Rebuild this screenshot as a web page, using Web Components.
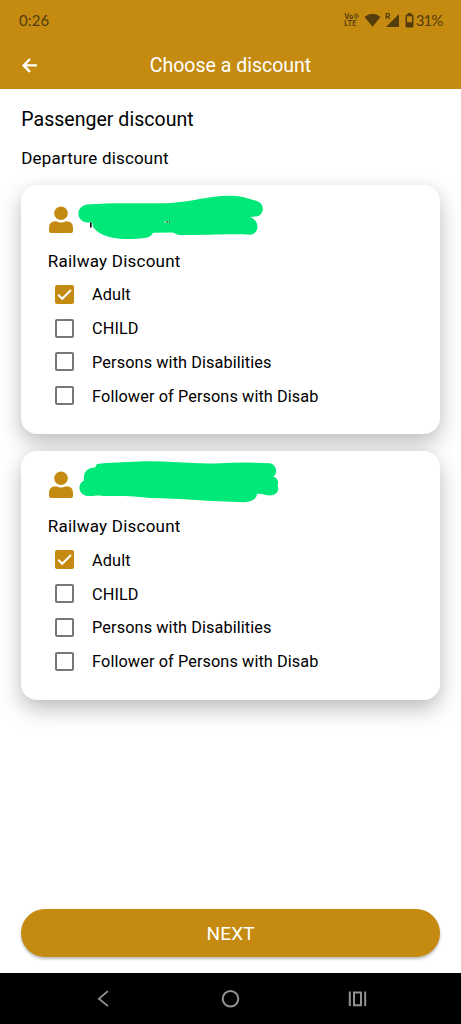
<!DOCTYPE html>
<html lang="en"><head><meta charset="utf-8"><title>Choose a discount</title>
<style>html,body{margin:0;height:100%;background:#fff;overflow:hidden}</style></head><body>
<discount-app></discount-app>
<script>
const define=(name,html)=>{
  const t=document.createElement('template');t.innerHTML=html;
  customElements.define(name,class extends HTMLElement{
    constructor(){super();this.attachShadow({mode:'open'}).append(t.content.cloneNode(true));}
  });
};
define('status-bar',`<style>
:host{display:flex;height:40px;box-sizing:border-box;padding:0 19px;justify-content:space-between;align-items:center;color:#553c0b;font:15px/20px Lato,sans-serif}
.time{letter-spacing:.1px}.icons{display:flex;align-items:center}svg{display:block}
.volte{display:grid;font:bold 7px/7px Inter,sans-serif;width:16px;margin-right:3.5px}
.volte div{display:flex;height:7px}
.pct{letter-spacing:-.9px;margin-left:2px;margin-right:-.5px}
.sig{margin-left:4px}.bat{margin-left:5px}
</style><span class="time">0:26</span><div class="icons">
<div class="volte"><div><span>Vo</span><svg width="6" height="7" viewBox="0 0 6 7" fill="none" stroke="currentColor"><path d="M1 3.5 3.8 6.2M1 1.8Q4 2 4.3 5M2 .6Q5.3 1 5.6 4" stroke-width=".9"/></svg></div><span>LTE</span></div>
<svg width="17" height="14" viewBox="0 0 17 14"><path d="M.5 4Q8.5-2.5 16.5 4L8.5 13.7Z" fill="currentColor"/></svg>
<svg class="sig" width="15" height="16" viewBox="0 0 15 16"><path d="M14 2V15H1Z" fill="currentColor"/><text x="0" y="6.6" font-size="8" font-weight="700" font-family="Inter" fill="currentColor" stroke="#c48b10" stroke-width="1.5" paint-order="stroke">R</text></svg>
<svg class="bat" width="9" height="15" viewBox="0 0 9 15"><path fill="currentColor" fill-rule="evenodd" d="M2.7 0H6.3V1.6H7.5Q8.5 1.6 8.5 2.6V13.5Q8.5 14.5 7.5 14.5H1.5Q.5 14.5.5 13.5V2.6Q.5 1.6 1.5 1.6H2.7ZM2 3.3V9.2H7V3.3Z"/></svg>
<span class="pct">31%</span></div>`);
define('app-header',`<style>
:host{display:grid;grid-template-columns:60px 1fr 60px;align-items:center;height:49px;color:#fff;font:19.5px/26px Roboto,sans-serif}
svg{margin-left:21px;display:block}h1{margin:0;font:inherit;text-align:center;letter-spacing:0;padding-top:2px}
</style><svg width="18" height="18" viewBox="0 0 18 18" fill="none" stroke="currentColor" stroke-width="2.4"><path d="M16 9.4H3M9 3 2.6 9.4 9 15.8"/></svg><h1><slot></slot></h1>`);
define('user-icon',`<style>:host{display:block;width:24px;height:28px}svg{display:block}</style>
<svg width="24" height="28" viewBox="0 0 24 28" fill="#c48b10"><circle cx="12" cy="7.2" r="6.8"/><path d="M0 25V22Q0 15.3 6.5 15.3Q8 15.3 9 15.9Q12 17 15 15.9Q16 15.3 17.5 15.3Q24 15.3 24 22V25Q24 27 22 27H2Q0 27 0 25Z"/></svg>`);
define('check-option',`<style>
:host{display:flex;align-items:center;height:33.9px;padding-left:7px;gap:18.3px;font-size:16.3px;letter-spacing:.09px}
.box{box-sizing:border-box;width:19px;height:19px;border:2px solid #777;border-radius:2px;flex:none}
svg{display:none}:host([checked]) .box{background:#c48b10;border-color:#c48b10}
:host([checked]) svg{display:block}span{white-space:nowrap;padding-top:2px}
</style><div class="box"><svg width="15" height="15" viewBox="0 0 15 15" fill="none" stroke="#fff" stroke-width="2"><path d="M1.2 7.8 5.2 11.8 14 3"/></svg></div><span><slot></slot></span>`);
define('discount-card',`<style>
:host{display:block;box-sizing:border-box;height:249.4px;border-radius:16px;background:#fff;padding:20.7px 26.5px 0;box-shadow:0 9px 22px rgba(0,0,0,.26),0 0 8px rgba(0,0,0,.03)}
.person{display:flex;height:38px;gap:5px;margin-left:1px}
h3{margin:0 0 .5px;font:17px/32px Roboto,sans-serif;letter-spacing:.23px;padding-top:1px}
</style><div class="person"><user-icon></user-icon><slot name="name"></slot></div>
<h3>Railway Discount</h3><check-option checked>Adult</check-option><check-option>CHILD</check-option><check-option>Persons with Disabilities</check-option><check-option>Follower of Persons with Disab</check-option>`);
define('next-button',`<style>
:host{display:block}button{display:block;width:100%;height:48px;border:0;border-radius:24px;background:#c48b10;color:#fff;font:19px/48px Roboto,sans-serif;letter-spacing:.2px;padding:1px 0 0;box-shadow:0 2px 3px rgba(0,0,0,.28)}
</style><button><slot></slot></button>`);
define('nav-bar',`<style>
:host{display:grid;grid-template-columns:127px 127px 127px;justify-content:center;justify-items:center;align-items:center;height:51px;background:#000}
svg{display:block}
</style>
<svg width="20" height="20" viewBox="0.6 0.4 20 20" fill="none" stroke="#929292" stroke-width="1.8"><path d="M14.5 2.5 5.5 10.2 14.5 17.5"/></svg>
<svg width="20" height="20" viewBox="0.5 0.5 20 20" fill="none" stroke="#929292" stroke-width="2"><circle cx="10" cy="10.3" r="7.8"/></svg>
<svg width="20" height="20" viewBox="0.6 0.4 20 20" fill="none" stroke="#929292" stroke-width="2"><path d="M2.4 3V17.5M17.8 3V17.5M6.6 3.9H13.6V16.7H6.6Z"/></svg>`);
define('discount-app',`<style>
:host{display:flex;flex-direction:column;height:1024px;color:#000;font:16px/22px Roboto,sans-serif;background:#fff}
.top{background:#c48b10}main{flex:1;padding:17.5px 21px 16px 21.3px;display:flex;flex-direction:column}
h2{margin:0;font:19.5px/26px Roboto,sans-serif;letter-spacing:.03px}
h2+p{margin:14.4px 0 16.2px;font-size:17px;line-height:22px;letter-spacing:.17px}
.cards{display:grid;gap:16.1px}next-button{margin-top:auto}
.mark{display:block;overflow:visible}
</style>
<div class="top"><status-bar></status-bar><app-header>Choose a discount</app-header></div>
<main><h2>Passenger discount</h2><p>Departure discount</p><div class="cards">
<discount-card><svg class="mark" slot="name" width="190" height="44" viewBox="78 205.5 190 44"><path fill="#00e878" d="M87 204C110 202 135 203 160 202.800C190 203 205 195 232 195.300C244 195.500 249 199 257 200.500C266 204 264 216 255 216L250 216.500C260 220 260 233 250 234.300C233 233 210 235 180 234.500C175 234 174 231.500 171 232L153 232.300C151 236 149 237 144 237.500C126 240 102 239 93.500 227C92 224 93 222 91 222H87C76 221 75 206 87 204Z"/><path d="M90 222H91.600V227H90Z"/><path fill="#fff" d="M164 221.200H170.500V222H164Z"/><path d="M166.300 221H167.700V222H166.300ZM169 221H170V222H169Z"/></svg></discount-card>
<discount-card><svg class="mark" slot="name" width="200" height="44" viewBox="78 471.500 200 44"><path fill="#00e878" d="M97 464.500C107 463 125 463 139 462C166 461 192 465 220 463.700Q245 462.500 270 463.700C277 465 278 475 273 477.300C278 478 279 483 277.500 486.500C280 491 276 496 270 496C265 496 263 493.500 257 494.300C257 499 252 502.500 244 502.700C210 502 180 499 150 498.500C130 496 110 496.500 104 496.500C98 495 94 497 87 496.400C78 495 77 484 84 481C83 473 87 468 95 468Z"/></svg></discount-card>
</div><next-button>NEXT</next-button></main><nav-bar></nav-bar>`);
</script></body></html>
